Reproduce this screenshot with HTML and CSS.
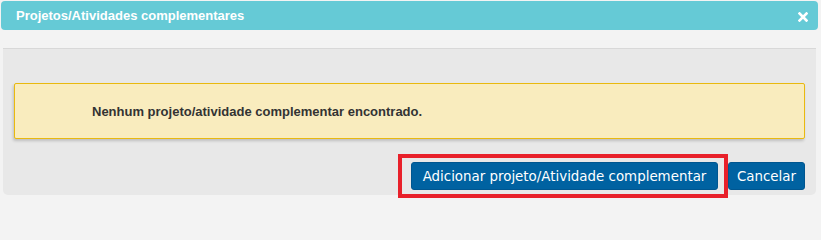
FILE: index.html
```html
<!DOCTYPE html>
<html lang="pt">
<head>
<meta charset="utf-8">
<title>Projetos/Atividades complementares</title>
<link rel="stylesheet" href="styles.css">
</head>
<body>
<div class="dialog">
  <div class="dialog-header">
    <span class="dialog-title">Projetos/Atividades complementares</span>
    <span class="dialog-close" aria-label="Fechar">
      <svg width="10" height="10" viewBox="0 0 10 10"><path d="M1.5 1.5 L8.5 8.5 M8.5 1.5 L1.5 8.5" stroke="#fff" stroke-width="2.6" stroke-linecap="square"/></svg>
    </span>
  </div>
  <div class="dialog-body">
    <div class="alert">Nenhum projeto/atividade complementar encontrado.</div>
    <div class="actions">
      <span class="highlight"><button class="btn btn-wide">Adicionar projeto/Atividade complementar</button></span>
      <button class="btn">Cancelar</button>
    </div>
  </div>
</div>
</body>
</html>
```
FILE: styles.css
```css
html, body {
  margin: 0;
  padding: 0;
  background: #f3f3f3;
}
html {
  min-height: 210px;
}
body {
  font-family: "Liberation Sans", Arial, sans-serif;
  min-height: 210px;
}
.dialog {
  margin: 1px 3px 0 1px;
}
.dialog-header {
  height: 29px;
  background: #65cad6;
  border-radius: 4px;
  display: flex;
  align-items: center;
  justify-content: space-between;
  padding: 0 10px 0 15px;
}
.dialog-title {
  color: #fff;
  font-weight: bold;
  font-size: 13px;
  margin-top: -1px;
}
.dialog-close {
  display: flex;
  width: 10px;
  height: 10px;
  margin-top: 2px;
}
.dialog-body {
  margin: 18px 2px 0 2px;
  background: #e8e8e8;
  border-top: 1px solid #d8d8d8;
  border-radius: 0 0 5px 5px;
  padding: 34px 11px 5px 11px;
}
.alert {
  background: #f9ecbe;
  border: 1px solid #e9b90f;
  border-radius: 2px;
  box-shadow: -1px 2px 3px rgba(0,0,0,0.18);
  height: 54px;
  display: flex;
  align-items: center;
  padding-left: 77px;
  font-size: 13px;
  font-weight: bold;
  color: #333;
}
.actions {
  display: flex;
  justify-content: flex-end;
  align-items: flex-start;
  gap: 10px;
  margin-top: 23px;
  padding-right: 0;
}
.highlight {
  position: relative;
  display: flex;
}
.highlight::after {
  content: "";
  position: absolute;
  top: -8px;
  bottom: -8px;
  left: -13px;
  right: -10px;
  border: 4px solid #e8202a;
  pointer-events: none;
}
.btn {
  font-family: "DejaVu Sans", Verdana, sans-serif;
  font-size: 13.4px;
  color: #fff;
  background: #0062a1;
  border: 1px solid #005690;
  border-radius: 3px;
  height: 28px;
  width: 77px;
  padding: 0;
  cursor: pointer;
}
.btn-wide {
  width: 307px;
}
```
